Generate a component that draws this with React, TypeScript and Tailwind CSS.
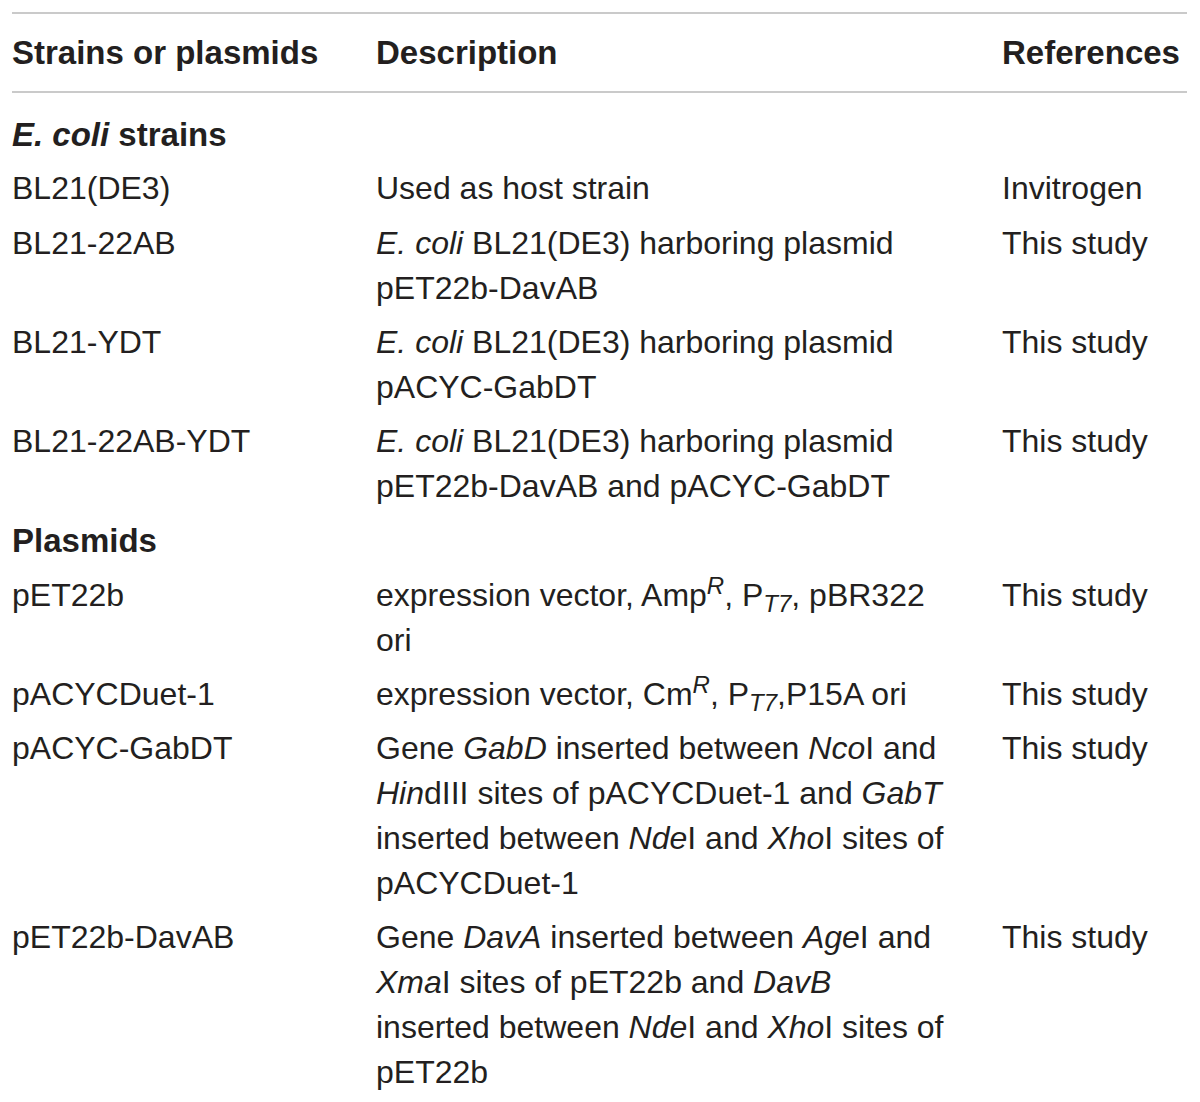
import React from "react";

type Row = {
  name: string;
  desc: React.ReactNode[];
  ref: string;
};

const I = ({ children }: { children: React.ReactNode }) => <i className="italic">{children}</i>;

const strains: Row[] = [
  { name: "BL21(DE3)", desc: ["Used as host strain"], ref: "Invitrogen" },
  {
    name: "BL21-22AB",
    desc: [
      <>
        <I>E. coli</I> BL21(DE3) harboring plasmid
      </>,
      "pET22b-DavAB",
    ],
    ref: "This study",
  },
  {
    name: "BL21-YDT",
    desc: [
      <>
        <I>E. coli</I> BL21(DE3) harboring plasmid
      </>,
      "pACYC-GabDT",
    ],
    ref: "This study",
  },
  {
    name: "BL21-22AB-YDT",
    desc: [
      <>
        <I>E. coli</I> BL21(DE3) harboring plasmid
      </>,
      "pET22b-DavAB and pACYC-GabDT",
    ],
    ref: "This study",
  },
];

const plasmids: Row[] = [
  {
    name: "pET22b",
    desc: [
      <>
        expression vector, Amp<sup className="italic">R</sup>, P<sub className="italic">T7</sub>, pBR322
      </>,
      "ori",
    ],
    ref: "This study",
  },
  {
    name: "pACYCDuet-1",
    desc: [
      <>
        expression vector, Cm<sup className="italic">R</sup>, P<sub className="italic">T7</sub>,P15A ori
      </>,
    ],
    ref: "This study",
  },
  {
    name: "pACYC-GabDT",
    desc: [
      <>
        Gene <I>GabD</I> inserted between <I>Nco</I>I and
      </>,
      <>
        <I>Hin</I>dIII sites of pACYCDuet-1 and <I>GabT</I>
      </>,
      <>
        inserted between <I>Nde</I>I and <I>Xho</I>I sites of
      </>,
      "pACYCDuet-1",
    ],
    ref: "This study",
  },
  {
    name: "pET22b-DavAB",
    desc: [
      <>
        Gene <I>DavA</I> inserted between <I>Age</I>I and
      </>,
      <>
        <I>Xma</I>I sites of pET22b and <I>DavB</I>
      </>,
      <>
        inserted between <I>Nde</I>I and <I>Xho</I>I sites of
      </>,
      "pET22b",
    ],
    ref: "This study",
  },
];

function DataRow({ row }: { row: Row }) {
  return (
    <div className="grid grid-cols-[364px_626px_185px] pt-[9.25px]">
      <div className="whitespace-nowrap">{row.name}</div>
      <div>
        {row.desc.map((d, i) => (
          <div key={i} className="whitespace-nowrap">
            {d}
          </div>
        ))}
      </div>
      <div className="whitespace-nowrap">{row.ref}</div>
    </div>
  );
}

export default function App() {
  return (
    <div
      className="w-[1200px] h-[1102px] bg-white text-[#231f20] text-[32px] leading-[45px] pl-[12px] pt-[12px]"
      style={{ fontFamily: '"Liberation Sans", Arial, sans-serif' }}
    >
      <div className="w-[1175px]">
        <div className="grid grid-cols-[364px_626px_185px] border-t-2 border-b-2 border-[#cacaca] pt-[16px] pb-[16px] font-bold text-[33px]">
          <div className="whitespace-nowrap">Strains or plasmids</div>
          <div>Description</div>
          <div className="whitespace-nowrap">References</div>
        </div>
        <div className="pt-[19px] font-bold text-[33px]">
          <I>E. coli</I> strains
        </div>
        {strains.map((r) => (
          <DataRow key={r.name} row={r} />
        ))}
        <div className="pt-[9.25px] font-bold text-[33px]">Plasmids</div>
        {plasmids.map((r) => (
          <DataRow key={r.name} row={r} />
        ))}
      </div>
    </div>
  );
}
